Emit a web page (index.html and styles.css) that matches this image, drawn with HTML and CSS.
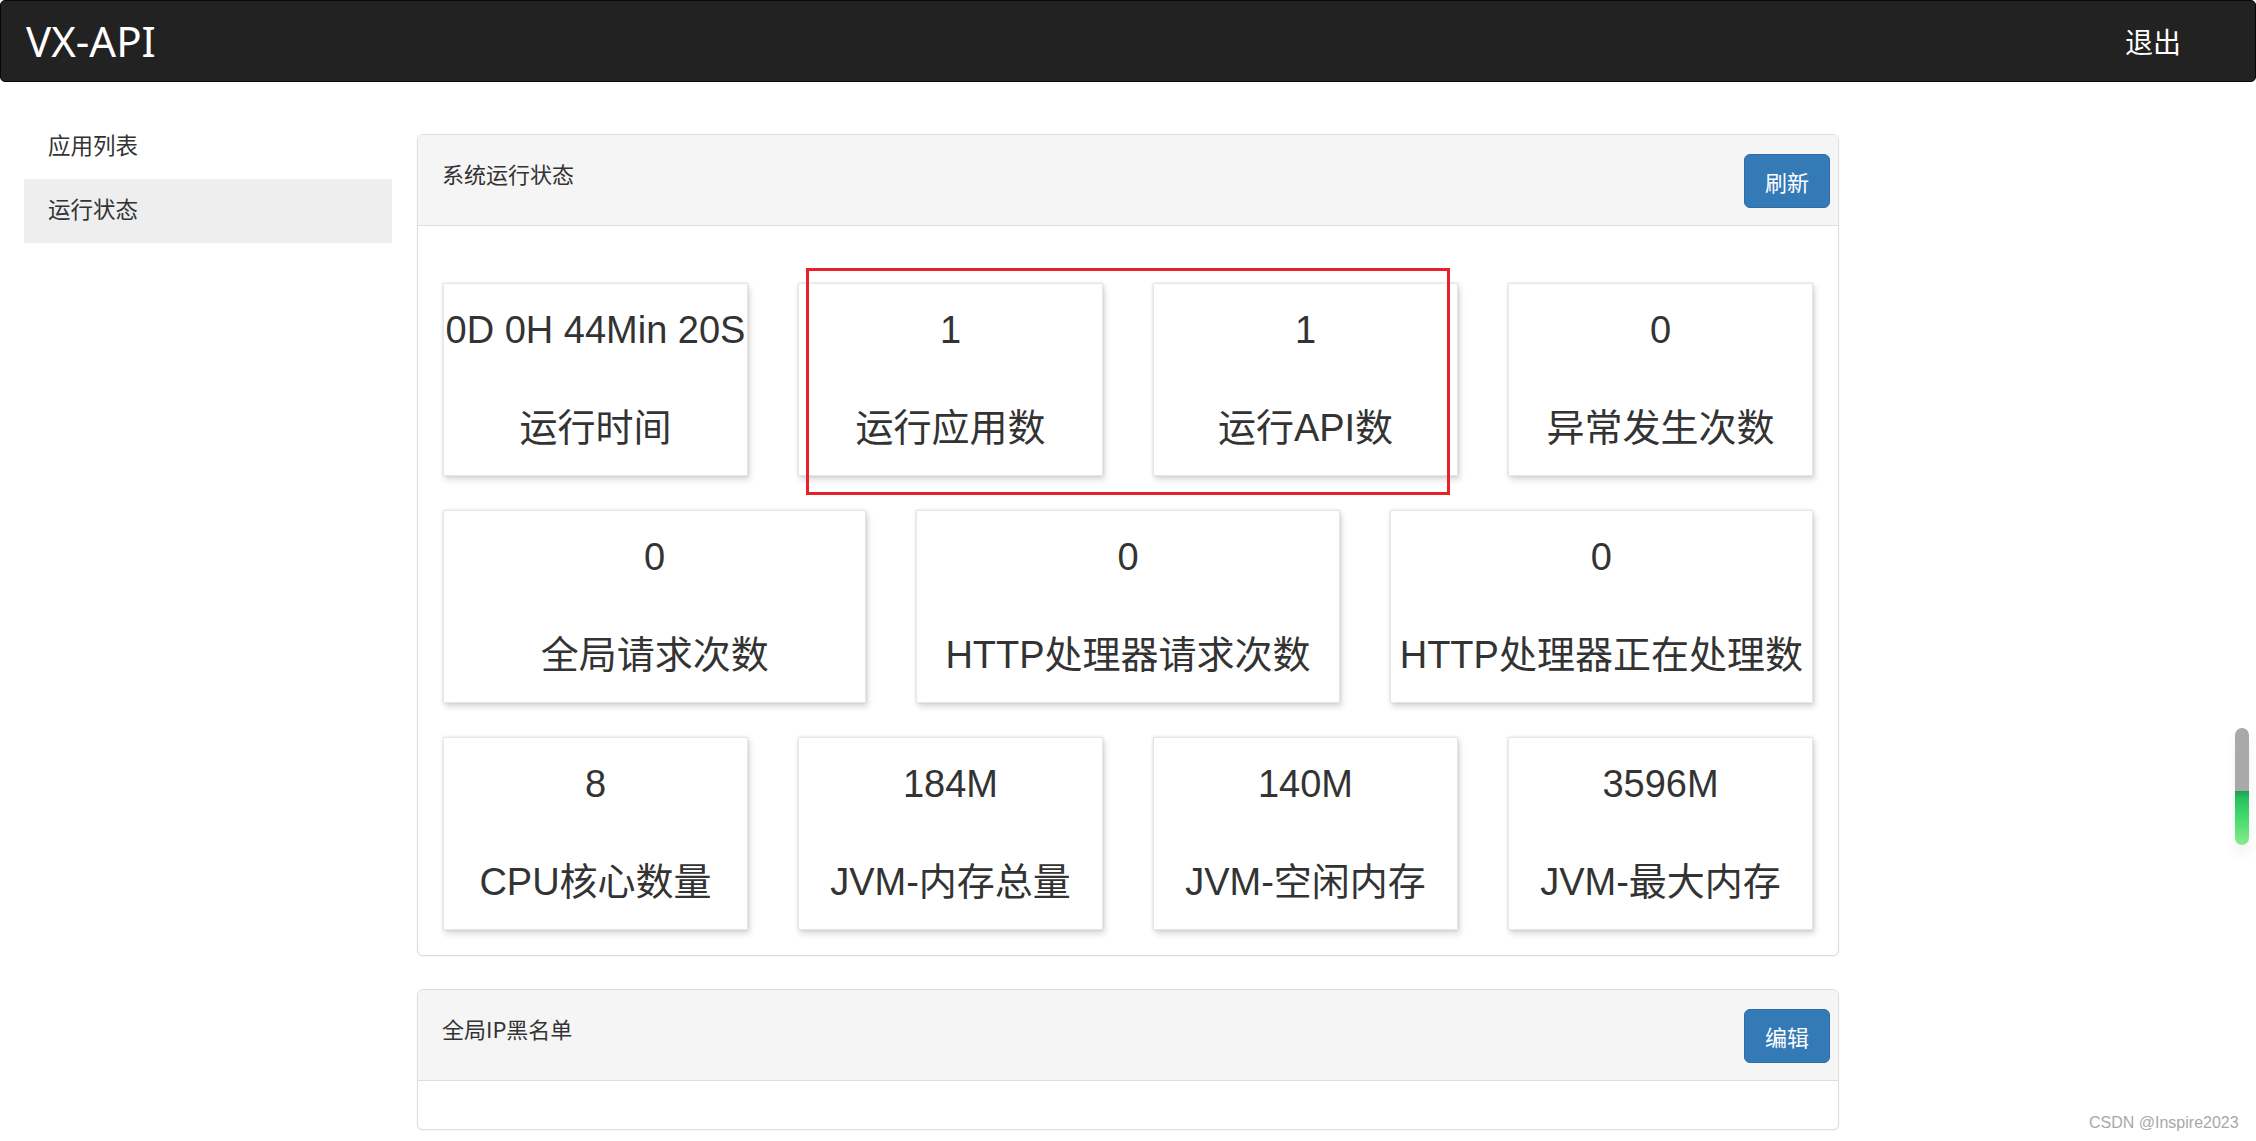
FILE: index.html
```html
<!DOCTYPE html>
<html lang="zh-CN">
<head>
<meta charset="utf-8">
<title>VX-API</title>
<link rel="stylesheet" href="styles.css">
</head>
<body>
<nav class="navbar">
  <span class="brand">VX-API</span>
  <span class="logout">退出</span>
</nav>

<div class="layout">
  <ul class="sidenav">
    <li class="nav-item">应用列表</li>
    <li class="nav-item active">运行状态</li>
  </ul>

  <main class="content">
    <section class="panel">
      <div class="panel-heading">
        <span class="panel-title">系统运行状态</span>
        <button class="btn">刷新</button>
      </div>
      <div class="panel-body stats">
        <div class="row row-4">
          <div class="card"><div class="num">0D 0H 44Min 20S</div><div class="label">运行时间</div></div>
          <div class="card"><div class="num">1</div><div class="label">运行应用数</div></div>
          <div class="card"><div class="num">1</div><div class="label">运行API数</div></div>
          <div class="card"><div class="num">0</div><div class="label">异常发生次数</div></div>
        </div>
        <div class="row row-3">
          <div class="card"><div class="num">0</div><div class="label">全局请求次数</div></div>
          <div class="card"><div class="num">0</div><div class="label">HTTP处理器请求次数</div></div>
          <div class="card"><div class="num">0</div><div class="label">HTTP处理器正在处理数</div></div>
        </div>
        <div class="row row-4">
          <div class="card"><div class="num">8</div><div class="label">CPU核心数量</div></div>
          <div class="card"><div class="num">184M</div><div class="label">JVM-内存总量</div></div>
          <div class="card"><div class="num">140M</div><div class="label">JVM-空闲内存</div></div>
          <div class="card"><div class="num">3596M</div><div class="label">JVM-最大内存</div></div>
        </div>
      </div>
    </section>

    <section class="panel panel-second">
      <div class="panel-heading">
        <span class="panel-title">全局IP黑名单</span>
        <button class="btn">编辑</button>
      </div>
      <div class="panel-body empty"></div>
    </section>
  </main>
</div>

<div class="highlight"></div>
<div class="scroll-widget"></div>
<div class="watermark">CSDN @Inspire2023</div>
</body>
</html>
```

FILE: styles.css
```css
* {
  box-sizing: border-box;
}

html, body {
  margin: 0;
  padding: 0;
  background: #ffffff;
}

body {
  position: relative;
  width: 2256px;
  height: 1141px;
  overflow: hidden;
  font-family: "Liberation Sans", "Noto Sans CJK SC", sans-serif;
  color: #333333;
}

/* ---------- navbar ---------- */
.navbar {
  height: 82px;
  width: 2256px;
  background: #222222;
  border: 1px solid #080808;
  border-radius: 5px;
  display: flex;
  align-items: center;
  justify-content: space-between;
  padding: 0 74px 0 25px;
}

.brand {
  font-family: "Noto Sans", "Liberation Sans", sans-serif;
  font-size: 42px;
  line-height: 1;
  color: #ffffff;
}

.logout {
  font-family: "Noto Sans CJK SC", sans-serif;
  font-size: 28px;
  line-height: 1;
  color: #ffffff;
}

/* ---------- layout ---------- */
.layout {
  display: flex;
  align-items: flex-start;
  margin-top: 33px;
  padding-left: 24px;
  gap: 25px;
}

.sidenav {
  list-style: none;
  margin: 0;
  padding: 0;
  width: 368px;
  flex: none;
}

.nav-item {
  height: 64px;
  display: flex;
  align-items: center;
  padding: 0 0 6px 24px;
  font-family: "Noto Sans CJK SC", sans-serif;
  font-size: 22.5px;
  line-height: 1;
  color: #333333;
}

.nav-item.active {
  background: #eeeeee;
}

.content {
  width: 1422px;
  flex: none;
  margin-top: 19px;
}

/* ---------- panels ---------- */
.panel {
  border: 1px solid #dddddd;
  border-radius: 6px;
  background: #ffffff;
  box-shadow: 0 1px 2px rgba(0, 0, 0, 0.05);
  overflow: hidden;
}

.panel-second {
  margin-top: 33px;
}

.panel-heading {
  height: 91px;
  background: #f5f5f5;
  border-bottom: 1px solid #dddddd;
  display: flex;
  justify-content: space-between;
  align-items: flex-start;
  padding: 0 8px 0 24px;
}

.panel-title {
  margin-top: 23px;
  font-family: "Noto Sans CJK SC", sans-serif;
  font-size: 22px;
  line-height: 30px;
  color: #333333;
}

.btn {
  margin-top: 19px;
  width: 86px;
  height: 54px;
  background: #337ab7;
  border: 1px solid #2e6da4;
  border-radius: 6px;
  color: #ffffff;
  font-family: "Noto Sans CJK SC", sans-serif;
  font-size: 22px;
  line-height: 1;
  padding: 0;
}

.panel-body.stats {
  padding: 57px 25px 25px 25px;
  display: flex;
  flex-direction: column;
  gap: 34px;
}

.panel-body.empty {
  height: 48px;
}

.row {
  display: grid;
  column-gap: 50px;
}

.row-4 {
  grid-template-columns: repeat(4, 1fr);
}

.row-3 {
  grid-template-columns: repeat(3, 1fr);
}

/* ---------- stat cards ---------- */
.card {
  height: 193px;
  background: #ffffff;
  border: 1px solid #e6e6e6;
  box-shadow: 0 0 3px rgba(0, 0, 0, 0.12), 2px 4px 6px rgba(0, 0, 0, 0.14);
  padding-top: 24px;
  text-align: center;
  font-size: 38px;
  line-height: 44px;
  color: #333333;
  white-space: nowrap;
}

.num {
  height: 44px;
}

.label {
  margin-top: 54px;
  height: 44px;
}

/* ---------- overlays ---------- */
.highlight {
  position: absolute;
  left: 806px;
  top: 268px;
  width: 644px;
  height: 227px;
  border: 3px solid #e8202a;
}

.scroll-widget {
  position: absolute;
  left: 2235px;
  top: 728px;
  width: 14px;
  height: 117px;
  border-radius: 7px;
  background: linear-gradient(to bottom, #a9a9a9 0%, #a9a9a9 54%, #1f9e4f 54%, #27c061 60%, #40d86a 75%, #86ec8e 100%);
  box-shadow: 0 10px 12px rgba(0, 0, 0, 0.06);
}

.watermark {
  position: absolute;
  left: 2089px;
  top: 1113px;
  font-family: "Liberation Sans", sans-serif;
  font-size: 16px;
  line-height: 20px;
  color: #a8a8a8;
  white-space: nowrap;
}
```
